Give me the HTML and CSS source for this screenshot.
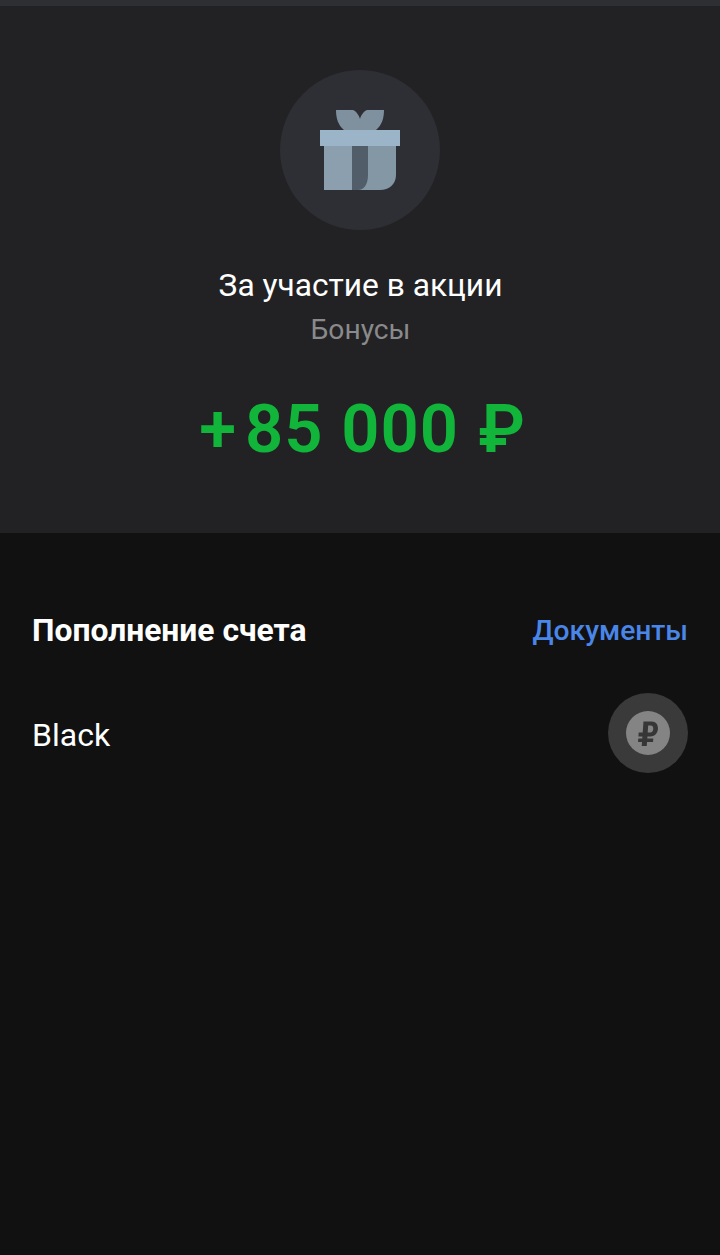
FILE: index.html
```html
<!DOCTYPE html>
<html lang="ru">
<head>
<meta charset="utf-8">
<title>Операция</title>
<link rel="stylesheet" href="styles.css">
</head>
<body>
<div class="topline"></div>
<section class="hero">
  <div class="gift-circle">
    <svg class="gift" width="80" height="80" viewBox="0 0 80 80">
      <path fill="#7f919e" d="M16 0H33C36 1 39 5 40 9C41 5 44 1 47 0H64C64 8 62 15 56 20H24C18 15 16 8 16 0Z"/>
      <path fill="#8c9fae" d="M4 30H33V80H4Z"/>
      <path fill="#8497a5" d="M33 30H76V65C76 74 69 80 60 80H33Z"/>
      <path fill="#515e6a" d="M32 30H48V65C48 74 44 80 38 80H32Z"/>
      <path fill="#9cb4c7" d="M0 20H80V36H0Z"/>
    </svg>
  </div>
  <h1 class="hero-title">За участие в акции</h1>
  <p class="hero-sub">Бонусы</p>
  <p class="amount">+<span class="num">85 000</span><span class="cur">₽</span></p>
</section>
<main class="details">
  <div class="row head-row">
    <h2 class="section-title">Пополнение счета</h2>
    <span class="link">Документы</span>
  </div>
  <div class="row account-row">
    <span class="account">Black</span>
    <div class="coin-outer">
      <div class="coin-inner">
        <svg width="44" height="44" viewBox="0 0 44 44">
          <path fill="#363636" fill-rule="evenodd" transform="translate(1.700 0) skewX(-4)" d="M16.500 10.500H24.500C29 10.500 31.500 13.500 31.500 18C31.500 22.500 28.500 25.500 24.500 25.500H21.500V27.500H27.500V31H21.500V35H16.500V31H12.500V27.500H16.500V25.500H12.500V21.500H16.500ZM21.500 14.600V21.500H24C26 21.500 26.800 20 26.800 18C26.800 16 26 14.600 24 14.600Z"/>
        </svg>
      </div>
    </div>
  </div>
</main>
</body>
</html>
```
FILE: styles.css
```css
* { box-sizing: border-box; }
html, body { margin: 0; padding: 0; }
body {
  width: 720px;
  height: 1255px;
  background: #111111;
  font-family: Roboto, "Liberation Sans", sans-serif;
  color: #fff;
  overflow: hidden;
}
.topline { height: 6px; background: #2e2f33; }
.hero {
  height: 527px;
  background: #222224;
  display: flex;
  flex-direction: column;
  align-items: center;
  padding-top: 64px;
}
.gift-circle {
  width: 160px;
  height: 160px;
  border-radius: 50%;
  background: #2e2f34;
  display: flex;
  align-items: center;
  justify-content: center;
}
.gift { display: block; }
.hero-title {
  margin: 36px 0 0 1px;
  font-size: 31.700px;
  line-height: 40px;
  font-weight: 400;
  color: #fff;
}
.hero-sub {
  margin: 4px 0 0 1px;
  font-size: 28.200px;
  line-height: 40px;
  color: #8a8a8c;
}
.amount {
  margin: 39px 0 0 5px;
  font-size: 67px;
  line-height: 80px;
  font-weight: 600;
  color: #11b53a;
  letter-spacing: 1px;
}
.num { margin-left: 8px; }
.cur { margin-left: 19px; }
.details { padding: 75px 32px 0; }
.row { display: flex; justify-content: space-between; align-items: center; }
.head-row { height: 44px; }
.section-title { margin: 0; font-size: 31.800px; font-weight: 700; line-height: 44px; }
.link { font-size: 28.200px; font-weight: 500; color: #4a86e8; }
.account-row { margin-top: 41px; }
.account { font-size: 32px; padding-top: 4px; }
.coin-outer {
  width: 80px;
  height: 80px;
  border-radius: 50%;
  background: #3a3a3a;
  display: flex;
  align-items: center;
  justify-content: center;
}
.coin-inner {
  width: 44px;
  height: 44px;
  border-radius: 50%;
  background: #848484;
}
.coin-inner svg { display: block; }
```
